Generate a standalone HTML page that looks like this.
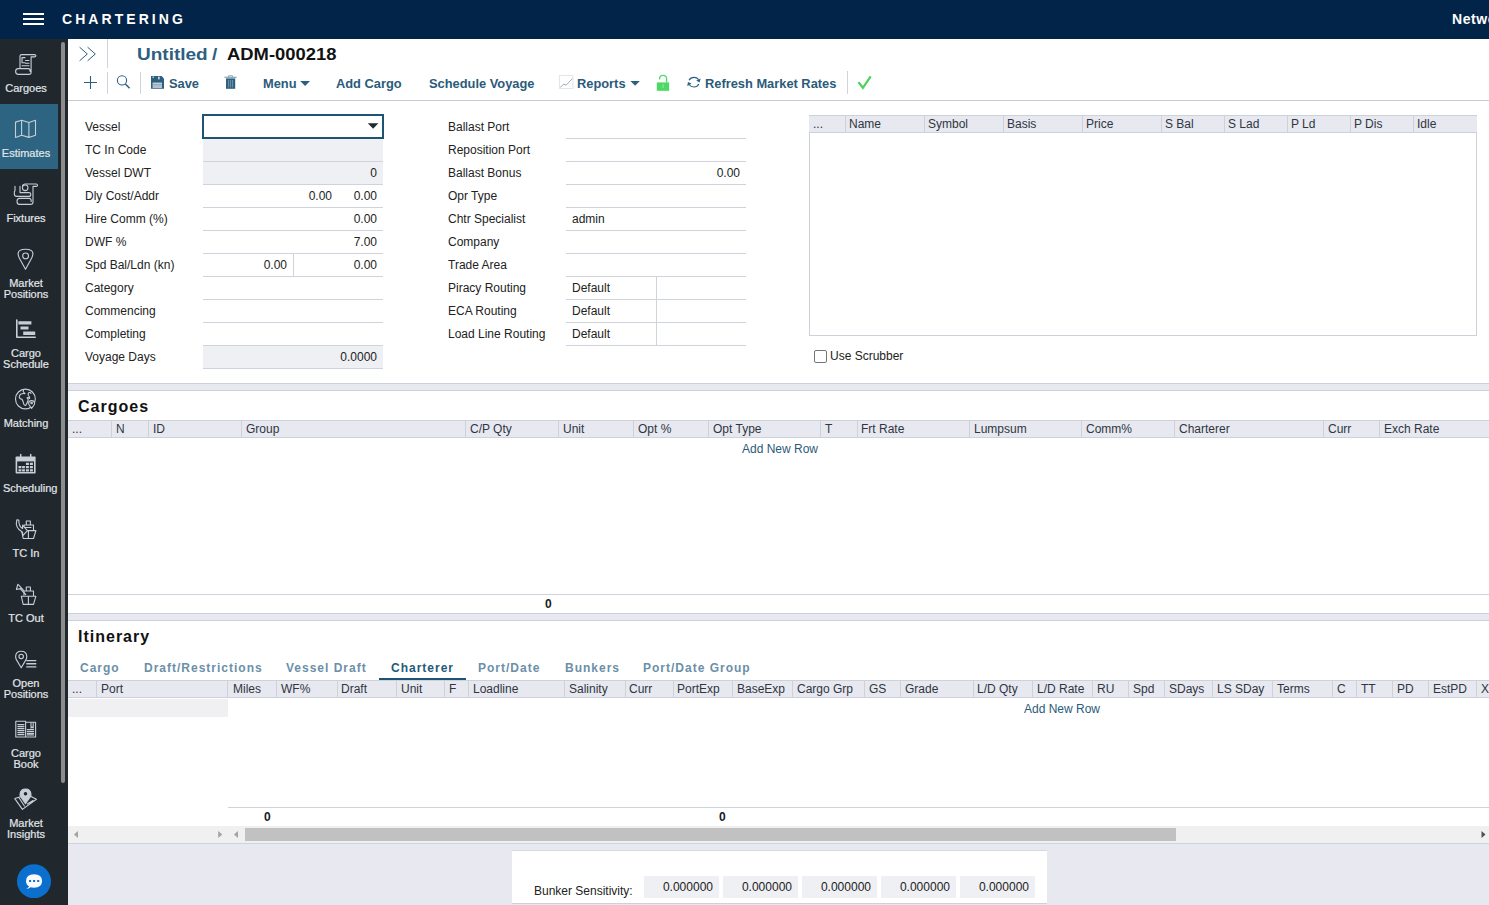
<!DOCTYPE html><html><head><meta charset="utf-8"><style>
*{box-sizing:border-box;margin:0;padding:0}
html,body{width:1489px;height:905px;overflow:hidden;background:#fff;font-family:"Liberation Sans",sans-serif;font-size:12px;color:#1a1a1a}
.a{position:absolute;white-space:nowrap}
.sb{position:absolute;left:0;width:58px;color:#e2e6ea;font-size:11px;text-align:center;line-height:11px}
.sb.act{background:#2d6482}
.sb svg{position:absolute;left:15px;top:15px}
.sb .lb{position:absolute;left:0;width:52px;top:44px;-webkit-text-stroke:0.2px #e2e6ea}
.tb{position:absolute;color:#2a5b7a;font-weight:bold;font-size:12.85px;white-space:nowrap;line-height:15px}
.lbl{position:absolute;white-space:nowrap;font-size:12px;color:#222;line-height:14px}
.val{position:absolute;white-space:nowrap;font-size:12px;color:#222;line-height:14px;text-align:right}
.ln{position:absolute;height:1px;background:#cfd4dc}
.vl{position:absolute;width:1px;background:#cfd4dc}
.gf{position:absolute;background:#eff0f3}
.gh{position:absolute;background:#e7e8f0;border-top:1px solid #cdd2da;border-bottom:1px solid #cdd2da}
.gh span{position:absolute;top:1px;font-size:12px;color:#2f3640;white-space:nowrap;line-height:14px}
.gh i{position:absolute;top:0;width:1px;height:100%;background:#cdd2da}
</style></head><body>
<div class="a" style="left:0;top:0;width:1489px;height:39px;background:#032449">
<div class="a" style="left:23px;top:13px;width:21px;height:2px;background:#fff"></div>
<div class="a" style="left:23px;top:18px;width:21px;height:2px;background:#fff"></div>
<div class="a" style="left:23px;top:23px;width:21px;height:2px;background:#fff"></div>
<div class="a" style="left:62px;top:11px;color:#fff;font-weight:bold;font-size:14px;letter-spacing:3.05px;line-height:16px">CHARTERING</div>
<div class="a" style="left:1452px;top:11px;color:#fff;font-weight:bold;font-size:14px;letter-spacing:0.6px;line-height:16px">Network</div>
</div>
<div class="a" style="left:0;top:39px;width:68px;height:866px;background:#20282e">
<div class="a" style="left:61px;top:3px;width:4px;height:741px;background:#8c8c8c;border-radius:2px"></div>
<div class="sb" style="top:0px;height:65px"><div class="lb">Cargoes</div></div>
<div class="sb act" style="top:65px;height:65px"><div class="lb">Estimates</div></div>
<div class="sb" style="top:130px;height:65px"><div class="lb">Fixtures</div></div>
<div class="sb" style="top:195px;height:70px"><div class="lb">Market<br>Positions</div></div>
<div class="sb" style="top:265px;height:70px"><div class="lb">Cargo<br>Schedule</div></div>
<div class="sb" style="top:335px;height:65px"><div class="lb">Matching</div></div>
<div class="sb" style="top:400px;height:65px"><div class="lb" style="left:3px;width:auto;text-align:left">Scheduling</div></div>
<div class="sb" style="top:465px;height:65px"><div class="lb">TC In</div></div>
<div class="sb" style="top:530px;height:65px"><div class="lb">TC Out</div></div>
<div class="sb" style="top:595px;height:70px"><div class="lb">Open<br>Positions</div></div>
<div class="sb" style="top:665px;height:70px"><div class="lb">Cargo<br>Book</div></div>
<div class="sb" style="top:735px;height:70px"><div class="lb">Market<br>Insights</div></div>
</div>
<svg class="a" style="left:0;top:39px" width="68" height="866" viewBox="0 39 68 866" fill="none" stroke="#c9ced6" stroke-width="1.1" stroke-linejoin="round" stroke-linecap="round">
<!-- cargoes scroll -->
<path d="M20 68.5V56.2Q20 54.6 21.6 54.6H34.4Q35.9 54.6 35.9 55.8Q35.9 56.9 34.4 56.9H31.1V72.2Q31.1 74.4 28.9 74.4H18.4Q15.6 74.4 15.6 71.5Q15.6 68.6 18.4 68.6H28.2Q30.2 68.6 30.2 71.5"/>
<path d="M22 65.8H29M25.5 60.5H29M25.5 63.3H29M22 57.6H25M22 57.6V62.8M22 62.8H25"/>
<!-- estimates map -->
<path d="M15.5 122.1L21.6 120.3L28.9 122.5L35.5 120.3V135.2L28.9 137.4L21.6 135.2L15.5 137.4Z M21.6 120.3V135.2 M28.9 122.5V137.4"/>
<!-- fixtures -->
<path d="M22.5 185.3Q23.5 184 25 184H36.2Q37.5 184 37.5 185.2Q37.5 186.4 36.2 186.4H33V202Q33 204.4 30.6 204.4H19.6Q17 204.4 17 201.4Q17 198.4 19.6 198.4H29.2Q31.2 198.4 31.2 201.4"/>
<circle cx="25.2" cy="187.8" r="2.8"/>
<path d="M15 186.2V190.5Q14.3 191.2 14.3 193.5Q14.3 196.4 16.4 196.4H28.8Q30.8 196.4 30.8 194.4Q30.8 192.6 28.8 192.6H20V186.2"/>
<!-- market positions pin -->
<path d="M25.5 269.3L19.4 258.2Q18.1 255.8 18.1 253.4Q18.3 249.2 25.5 249.2Q32.7 249.2 32.9 253.4Q32.9 255.8 31.6 258.2Z"/>
<circle cx="25.6" cy="255.9" r="2.9"/>
<!-- cargo schedule -->
<path d="M16.8 320V337.3H35.2" stroke-width="1.6"/>
<path d="M18.4 321.2h13v3.4h-13zM20.5 326.6h8v3h-8zM23.2 331.4h12v3.6h-12z" fill="#c9ced6" stroke="none"/>
<!-- matching globe -->
<circle cx="25.4" cy="399" r="9.9"/>
<path d="M23.5 390.2Q22.6 391.6 24 392.6L25 393.7Q23 393 20.6 394.2Q19 395.8 19.3 397.6Q20.2 399 22 399.4Q23.4 401.4 23.6 403.6Q24.4 405.8 25.8 405.2Q27.6 402.5 28.2 400Q28 398.6 27 397.8Q29 397.3 29.6 398.6Q30 396.8 28.4 395.6Q27.6 394 28.6 392.8Q30.4 392 31 393.5"/>
<path d="M31.6 408.4L29.3 405.2Q28.6 404.2 28.6 403Q28.8 400.6 31.6 400.6Q34.4 400.6 34.6 403Q34.6 404.2 33.9 405.2Z" fill="#20282e"/>
<circle cx="31.6" cy="403" r="0.8"/>
<!-- scheduling calendar -->
<rect x="15.6" y="456.4" width="20" height="17.2" rx="0.8" fill="#c9ced6" stroke="none"/>
<rect x="17.2" y="461.4" width="16.8" height="10.6" fill="#20282e" stroke="none"/>
<path d="M20.7 454.4V459.8M30.7 454.4V459.8" stroke-width="1.5"/>
<path d="M25.9 462.7h3v2.3h-3zM29.9 462.7h3v2.3h-3zM18.5 466h2.9v2.3h-2.9zM22.1 466h2.8v2.3h-2.8zM25.9 466h3v2.3h-3zM29.9 466h3v2.3h-3zM18.5 469.2h2.9v2.3h-2.9zM22.1 469.2h2.8v2.3h-2.8zM25.9 469.2h3v2.3h-3zM29.9 469.2h3v2.3h-3z" fill="#c9ced6" stroke="none"/>
<!-- TC In ship -->
<path d="M26.3 524.9V521H30.4V524.9M24 530.6V525H33.5V530.5M21.5 530.6H35.9L33.5 538.5H23.2Z M28.4 530.6V538.5 M25.2 527.5H31"/>
<path d="M16.8 519.8Q14.6 527.8 22.6 532.2V535.8L27.4 530.6L22.6 525.2V528.6Q18.6 526.2 18.8 520Z" fill="#20282e"/>
<!-- TC Out ship -->
<path d="M26.3 590.6V587H30.4V590.6M24 595V591H33.5V596M21.3 596.2H35.9L33.5 604.4H23.2Z M28.4 596.2V604.4"/>
<path d="M25.7 594.5L20.8 589.4L21.7 588.4L16.4 589.5L17.8 584.3L18.8 585.2L23.6 590.4"/>
<!-- open positions -->
<path d="M21.2 667.8L16.8 660.4Q15.6 658.6 15.6 656.5Q15.8 651.3 21.2 651.3Q26.6 651.3 26.8 656.5Q26.8 658.6 25.6 660.4Z"/>
<circle cx="21.2" cy="656.4" r="2.2"/>
<path d="M26.8 660.6H35.8M26.8 663.7H35.8M26.8 666.9H35.8" stroke-width="1.4"/>
<!-- cargo book -->
<path d="M15.8 721.3H25.6V737H15.8ZM25.6 722.2H35.6V737H25.6Z"/>
<path d="M17.8 724.6H24M17.8 726.6H24M17.8 728.6H24M17.8 730.6H24M17.8 732.6H24M17.8 734.6H24M27.2 729.6H33.6M27.2 731.6H33.6M27.2 733.6H33.6M27.2 735H33.6M31 722.5V728L32.1 727L33.2 728V722.5"/>
<!-- market insights -->
<path d="M14.8 798.6L20.4 796.8 M30.6 796.2L36.4 799.3L22.4 809.4L14.8 798.6 M19 797.8L24.4 806 M27.4 804L33 800.5"/>
<path d="M25.5 803.6L20.8 797Q20 795.6 20 794.2Q20.4 789 25.5 789Q30.6 789 31 794.2Q31 795.6 30.2 797Z" fill="#c9ced6"/>
<circle cx="25.5" cy="793.8" r="1.8" fill="#20282e" stroke="none"/>
</svg>
<svg class="a" style="left:17px;top:864px" width="34" height="34" viewBox="17 864 34 34">
<circle cx="34" cy="881.3" r="17" fill="#0b6fce"/>
<path d="M26.4 888.8Q28.6 887.6 29.2 886.6Q26 884.8 26 881Q26.2 874.4 34 874.3Q42 874.4 42.1 881Q42 887.6 34 887.7Q32.2 887.7 30.6 887.3Q28.6 888.8 26.4 888.8Z" fill="#fafbfc"/>
<rect x="29.1" y="880" width="2" height="2" fill="#0b6fce"/><rect x="33.1" y="880" width="2" height="2" fill="#0b6fce"/><rect x="37.2" y="880" width="2" height="2" fill="#0b6fce"/>
</svg>
<svg class="a" style="left:68px;top:39px" width="832" height="62" viewBox="68 39 832 62" fill="none">
<path d="M79.6 47.2L87.3 54L79.6 60.8M87.6 47.2L95.3 54L87.6 60.8" stroke="#2d6080" stroke-width="1"/>
<path d="M84 82.5H97M90.5 76V89" stroke="#2d6080" stroke-width="1.1"/>
<circle cx="122" cy="80.4" r="4.6" stroke="#2d6080" stroke-width="1.1"/>
<path d="M125.4 84L129.6 88.3" stroke="#2d6080" stroke-width="1.5"/>
<path d="M151 76H161.6L164 78.4V88.8H151Z" fill="#2d6080"/>
<rect x="152.6" y="82.6" width="9.4" height="5.2" fill="#d9dde3"/>
<path d="M152.6 84.3H162M152.6 86H162" stroke="#2d6080" stroke-width="0.5"/>
<rect x="158.3" y="76.6" width="1.2" height="2.8" fill="#fff"/>
<rect x="152.6" y="76.6" width="1.2" height="1.2" fill="#fff"/>
<path d="M224.4 77.3H236.6" stroke="#8aa3b6" stroke-width="1.2"/>
<path d="M228.5 77V75.8H232.5V77" stroke="#8aa3b6" stroke-width="1"/>
<path d="M226 78.4H235.2V88.8H226Z" fill="#2d6080"/>
<path d="M228.6 80V87.4M230.6 80V87.4M232.6 80V87.4" stroke="#a9b9c6" stroke-width="0.6"/>
<path d="M300.2 81H310L305.1 86.1Z" fill="#2d6080"/>
<rect x="559.5" y="75.5" width="13.4" height="13" stroke="#e3e6ea" stroke-width="1"/>
<path d="M560.2 87.3L563.8 84.1L566 85.2L572.4 78.7" stroke="#8fa0b2" stroke-width="0.9"/>
<path d="M630.4 81H639.8L635.1 85.8Z" fill="#2d6080"/>
<path d="M659.6 79.4V78.4Q659.8 75.3 663.1 75.3Q666.5 75.3 666.6 78.6V82.6" stroke="#4cd964" stroke-width="1.3"/>
<rect x="656.8" y="82.4" width="12.3" height="8.4" fill="#4cd964"/>
<rect x="662.6" y="84.4" width="1" height="3.4" fill="#a7e7b0"/>
<path d="M689 80.3Q690.5 77.4 694 77.4Q697 77.4 698.6 79.6 M698.8 84Q697.4 87 694 87Q690.8 87 689.2 84.8" stroke="#2d6080" stroke-width="1.1"/>
<path d="M700.6 78.4L699.6 82.4L696.2 80.6Z M687.2 86L688 82L691.6 83.8Z" fill="#2d6080"/>
<path d="M858.4 82.1L862.9 87.8L870.7 76.4" stroke="#4cd35a" stroke-width="2.2" stroke-linejoin="miter"/>
</svg>
<div class="vl" style="left:107px;top:39px;height:29px"></div>
<div class="a" style="left:137px;top:44px;font-size:19px;font-weight:bold;color:#2d6080;line-height:20px;transform:scaleY(0.91);transform-origin:0 16px">Untitled<span style="letter-spacing:-1px"> </span>/</div>
<div class="a" style="left:227px;top:44px;font-size:18.4px;font-weight:bold;color:#111;line-height:20px;transform:scaleY(0.93);transform-origin:0 16px">ADM-000218</div>
<div class="vl" style="left:107px;top:72px;height:22px"></div>
<div class="vl" style="left:140px;top:72px;height:22px"></div>
<div class="tb" style="left:169px;top:76px">Save</div>
<div class="tb" style="left:263px;top:76px">Menu</div>
<div class="tb" style="left:336px;top:76px">Add Cargo</div>
<div class="tb" style="left:429px;top:76px">Schedule Voyage</div>
<div class="tb" style="left:577px;top:76px">Reports</div>
<div class="tb" style="left:705px;top:76px">Refresh Market Rates</div>
<div class="vl" style="left:847px;top:71px;height:23px"></div>
<div class="ln" style="left:68px;top:100px;width:1421px;background:#c5ccd6"></div>
<div class="lbl" style="left:85px;top:120px">Vessel</div>
<div class="lbl" style="left:85px;top:143px">TC In Code</div>
<div class="lbl" style="left:85px;top:166px">Vessel DWT</div>
<div class="lbl" style="left:85px;top:189px">Dly Cost/Addr</div>
<div class="lbl" style="left:85px;top:212px">Hire Comm (%)</div>
<div class="lbl" style="left:85px;top:235px">DWF %</div>
<div class="lbl" style="left:85px;top:258px">Spd Bal/Ldn (kn)</div>
<div class="lbl" style="left:85px;top:281px">Category</div>
<div class="lbl" style="left:85px;top:304px">Commencing</div>
<div class="lbl" style="left:85px;top:327px">Completing</div>
<div class="lbl" style="left:85px;top:350px">Voyage Days</div>
<div class="gf" style="left:203px;top:138px;width:180px;height:46px"></div>
<div class="gf" style="left:203px;top:345px;width:180px;height:23px"></div>
<div class="ln" style="left:203px;top:161px;width:180px"></div>
<div class="ln" style="left:203px;top:184px;width:180px"></div>
<div class="ln" style="left:203px;top:207px;width:180px"></div>
<div class="ln" style="left:203px;top:230px;width:180px"></div>
<div class="ln" style="left:203px;top:253px;width:180px"></div>
<div class="ln" style="left:203px;top:276px;width:180px"></div>
<div class="ln" style="left:203px;top:299px;width:180px"></div>
<div class="ln" style="left:203px;top:322px;width:180px"></div>
<div class="ln" style="left:203px;top:345px;width:180px"></div>
<div class="ln" style="left:203px;top:368px;width:180px"></div>
<div class="a" style="left:202px;top:114px;width:182px;height:25px;border:2px solid #1f5372;background:#fff"></div>
<div class="vl" style="left:293px;top:254px;height:23px"></div>
<svg class="a" style="left:366px;top:121px" width="14" height="10" viewBox="366 121 14 10"><path d="M367.8 123.2H378.4L373.1 128.8Z" fill="#222a30"/></svg>
<div class="val" style="left:277px;width:100px;top:166px">0</div>
<div class="val" style="left:232px;width:100px;top:189px">0.00</div>
<div class="val" style="left:277px;width:100px;top:189px">0.00</div>
<div class="val" style="left:277px;width:100px;top:212px">0.00</div>
<div class="val" style="left:277px;width:100px;top:235px">7.00</div>
<div class="val" style="left:187px;width:100px;top:258px">0.00</div>
<div class="val" style="left:277px;width:100px;top:258px">0.00</div>
<div class="val" style="left:277px;width:100px;top:350px">0.0000</div>
<div class="lbl" style="left:448px;top:120px">Ballast Port</div>
<div class="lbl" style="left:448px;top:143px">Reposition Port</div>
<div class="lbl" style="left:448px;top:166px">Ballast Bonus</div>
<div class="lbl" style="left:448px;top:189px">Opr Type</div>
<div class="lbl" style="left:448px;top:212px">Chtr Specialist</div>
<div class="lbl" style="left:448px;top:235px">Company</div>
<div class="lbl" style="left:448px;top:258px">Trade Area</div>
<div class="lbl" style="left:448px;top:281px">Piracy Routing</div>
<div class="lbl" style="left:448px;top:304px">ECA Routing</div>
<div class="lbl" style="left:448px;top:327px">Load Line Routing</div>
<div class="ln" style="left:566px;top:138px;width:180px"></div>
<div class="ln" style="left:566px;top:161px;width:180px"></div>
<div class="ln" style="left:566px;top:184px;width:180px"></div>
<div class="ln" style="left:566px;top:207px;width:180px"></div>
<div class="ln" style="left:566px;top:230px;width:180px"></div>
<div class="ln" style="left:566px;top:253px;width:180px"></div>
<div class="ln" style="left:566px;top:276px;width:180px"></div>
<div class="ln" style="left:566px;top:299px;width:180px"></div>
<div class="ln" style="left:566px;top:322px;width:180px"></div>
<div class="ln" style="left:566px;top:345px;width:180px"></div>
<div class="vl" style="left:656px;top:276px;height:69px"></div>
<div class="val" style="left:640px;width:100px;top:166px">0.00</div>
<div class="lbl" style="left:572px;top:212px">admin</div>
<div class="lbl" style="left:572px;top:281px">Default</div>
<div class="lbl" style="left:572px;top:304px">Default</div>
<div class="lbl" style="left:572px;top:327px">Default</div>
<div class="a" style="left:809px;top:115px;width:668px;height:221px;border:1px solid #cdd2da"></div>
<div class="gh" style="left:809px;top:115px;width:668px;height:18px">
<span style="left:4px">...</span>
<i style="left:36px"></i>
<span style="left:40px">Name</span>
<i style="left:115px"></i>
<span style="left:119px">Symbol</span>
<i style="left:194px"></i>
<span style="left:198px">Basis</span>
<i style="left:273px"></i>
<span style="left:277px">Price</span>
<i style="left:352px"></i>
<span style="left:356px">S Bal</span>
<i style="left:415px"></i>
<span style="left:419px">S Lad</span>
<i style="left:478px"></i>
<span style="left:482px">P Ld</span>
<i style="left:541px"></i>
<span style="left:545px">P Dis</span>
<i style="left:604px"></i>
<span style="left:608px">Idle</span>
</div>
<div class="a" style="left:814px;top:350px;width:13px;height:13px;border:1px solid #767676;border-radius:2px;background:#fff"></div>
<div class="lbl" style="left:830px;top:349px">Use Scrubber</div>
<div class="a" style="left:68px;top:383px;width:1421px;height:8px;background:#e7e8f0;border-top:1px solid #cdd2da;border-bottom:1px solid #cdd2da"></div>
<div class="a" style="left:78px;top:398px;font-size:16px;font-weight:bold;letter-spacing:1px;color:#111;line-height:18px">Cargoes</div>
<div class="gh" style="left:68px;top:420px;width:1421px;height:18px">
<span style="left:4px">...</span>
<i style="left:43px"></i>
<span style="left:48px">N</span>
<i style="left:80px"></i>
<span style="left:85px">ID</span>
<i style="left:173px"></i>
<span style="left:178px">Group</span>
<i style="left:397px"></i>
<span style="left:402px">C/P Qty</span>
<i style="left:490px"></i>
<span style="left:495px">Unit</span>
<i style="left:565px"></i>
<span style="left:570px">Opt %</span>
<i style="left:640px"></i>
<span style="left:645px">Opt Type</span>
<i style="left:752px"></i>
<span style="left:757px">T</span>
<i style="left:789px"></i>
<span style="left:793px">Frt Rate</span>
<i style="left:901px"></i>
<span style="left:906px">Lumpsum</span>
<i style="left:1013px"></i>
<span style="left:1018px">Comm%</span>
<i style="left:1106px"></i>
<span style="left:1111px">Charterer</span>
<i style="left:1255px"></i>
<span style="left:1260px">Curr</span>
<i style="left:1311px"></i>
<span style="left:1316px">Exch Rate</span>
</div>
<div class="a" style="left:742px;top:442px;color:#2a5b7a;line-height:14px">Add New Row</div>
<div class="ln" style="left:68px;top:594px;width:1421px"></div>
<div class="a" style="left:545px;top:597px;font-weight:bold;line-height:14px">0</div>
<div class="a" style="left:68px;top:613px;width:1421px;height:8px;background:#e7e8f0;border-top:1px solid #cdd2da;border-bottom:1px solid #cdd2da"></div>
<div class="a" style="left:78px;top:628px;font-size:16px;font-weight:bold;letter-spacing:1px;color:#111;line-height:18px">Itinerary</div>
<div class="a" style="left:80px;top:661px;font-size:12px;font-weight:bold;letter-spacing:1px;color:#6b8fa8;line-height:15px">Cargo</div>
<div class="a" style="left:144px;top:661px;font-size:12px;font-weight:bold;letter-spacing:1px;color:#6b8fa8;line-height:15px">Draft/Restrictions</div>
<div class="a" style="left:286px;top:661px;font-size:12px;font-weight:bold;letter-spacing:1px;color:#6b8fa8;line-height:15px">Vessel Draft</div>
<div class="a" style="left:391px;top:661px;font-size:12px;font-weight:bold;letter-spacing:1px;color:#245a78;line-height:15px">Charterer</div>
<div class="a" style="left:478px;top:661px;font-size:12px;font-weight:bold;letter-spacing:1px;color:#6b8fa8;line-height:15px">Port/Date</div>
<div class="a" style="left:565px;top:661px;font-size:12px;font-weight:bold;letter-spacing:1px;color:#6b8fa8;line-height:15px">Bunkers</div>
<div class="a" style="left:643px;top:661px;font-size:12px;font-weight:bold;letter-spacing:1px;color:#6b8fa8;line-height:15px">Port/Date Group</div>
<div class="a" style="left:379px;top:678px;width:87px;height:2px;background:#1f5470"></div>
<div class="gh" style="left:68px;top:680px;width:1421px;height:18px">
<span style="left:4px">...</span>
<i style="left:28px"></i>
<span style="left:33px">Port</span>
<i style="left:159px"></i>
<span style="left:165px">Miles</span>
<i style="left:208px"></i>
<span style="left:213px">WF%</span>
<i style="left:269px"></i>
<span style="left:273px">Draft</span>
<i style="left:328px"></i>
<span style="left:333px">Unit</span>
<i style="left:376px"></i>
<span style="left:381px">F</span>
<i style="left:400px"></i>
<span style="left:405px">Loadline</span>
<i style="left:496px"></i>
<span style="left:501px">Salinity</span>
<i style="left:557px"></i>
<span style="left:561px">Curr</span>
<i style="left:605px"></i>
<span style="left:609px">PortExp</span>
<i style="left:664px"></i>
<span style="left:669px">BaseExp</span>
<i style="left:724px"></i>
<span style="left:729px">Cargo Grp</span>
<i style="left:796px"></i>
<span style="left:801px">GS</span>
<i style="left:832px"></i>
<span style="left:837px">Grade</span>
<i style="left:905px"></i>
<span style="left:909px">L/D Qty</span>
<i style="left:964px"></i>
<span style="left:969px">L/D Rate</span>
<i style="left:1024px"></i>
<span style="left:1029px">RU</span>
<i style="left:1060px"></i>
<span style="left:1065px">Spd</span>
<i style="left:1096px"></i>
<span style="left:1101px">SDays</span>
<i style="left:1144px"></i>
<span style="left:1149px">LS SDay</span>
<i style="left:1204px"></i>
<span style="left:1209px">Terms</span>
<i style="left:1264px"></i>
<span style="left:1269px">C</span>
<i style="left:1288px"></i>
<span style="left:1293px">TT</span>
<i style="left:1324px"></i>
<span style="left:1329px">PD</span>
<i style="left:1360px"></i>
<span style="left:1365px">EstPD</span>
<i style="left:1408px"></i>
<span style="left:1413px">X</span>
</div>
<div class="a" style="left:68px;top:699px;width:160px;height:18px;background:#f0f0f2"></div>
<div class="a" style="left:1024px;top:702px;color:#2a5b7a;line-height:14px">Add New Row</div>
<div class="ln" style="left:228px;top:807px;width:1261px"></div>
<div class="a" style="left:264px;top:810px;font-weight:bold;line-height:14px">0</div>
<div class="a" style="left:719px;top:810px;font-weight:bold;line-height:14px">0</div>
<div class="a" style="left:68px;top:826px;width:1421px;height:18px;background:#f0f0f0;border-bottom:1px solid #cfd4dc"></div>
<div class="a" style="left:245px;top:828px;width:931px;height:13px;background:#c1c1c1"></div>
<svg class="a" style="left:68px;top:826px" width="1421" height="17" viewBox="68 826 1421 17"><path d="M74 834.5L78 831V838Z M222.2 834.5L218.2 831V838Z M234 834.5L238 831V838Z" fill="#a3a3a3"/><path d="M1485.5 834.5L1481.5 831V838Z" fill="#505050"/></svg>
<div class="a" style="left:68px;top:844px;width:1421px;height:61px;background:#e7e8f0"></div>
<div class="a" style="left:512px;top:850px;width:535px;height:54px;background:#fff;border-top:1px solid #d5d9e0;border-bottom:1px solid #cdd2da"></div>
<div class="lbl" style="left:534px;top:884px">Bunker Sensitivity:</div>
<div class="a" style="left:644px;top:876px;width:75px;height:22px;background:#eff0f3"></div>
<div class="val" style="left:644px;width:69px;top:880px">0.000000</div>
<div class="a" style="left:723px;top:876px;width:75px;height:22px;background:#eff0f3"></div>
<div class="val" style="left:723px;width:69px;top:880px">0.000000</div>
<div class="a" style="left:802px;top:876px;width:75px;height:22px;background:#eff0f3"></div>
<div class="val" style="left:802px;width:69px;top:880px">0.000000</div>
<div class="a" style="left:881px;top:876px;width:75px;height:22px;background:#eff0f3"></div>
<div class="val" style="left:881px;width:69px;top:880px">0.000000</div>
<div class="a" style="left:960px;top:876px;width:75px;height:22px;background:#eff0f3"></div>
<div class="val" style="left:960px;width:69px;top:880px">0.000000</div>
</body></html>
